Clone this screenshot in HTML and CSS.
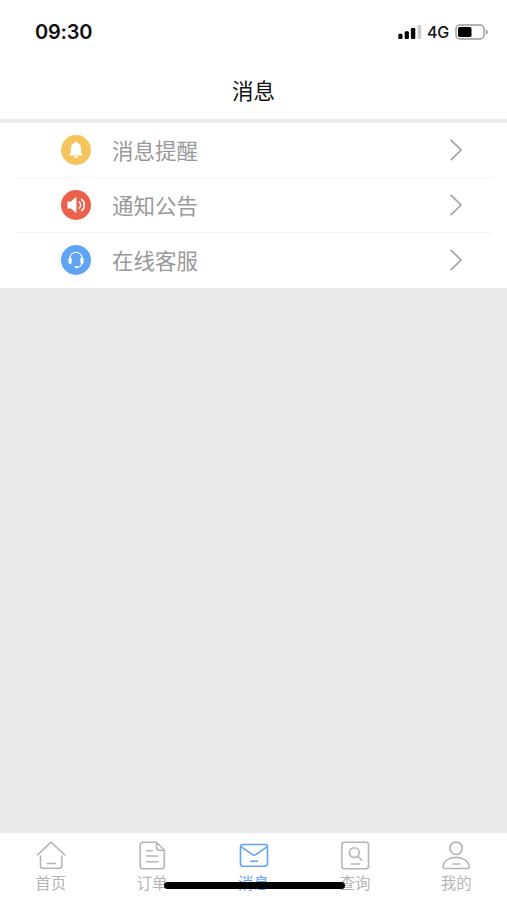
FILE: index.html
```html
<!DOCTYPE html>
<html lang="zh-CN">
<head>
<meta charset="utf-8">
<meta name="viewport" content="width=device-width, initial-scale=1">
<title>消息</title>
<link rel="stylesheet" href="styles.css">
</head>
<body>
<div class="app">
  <div class="status">
    <span class="time">09:30</span>
    <div class="status-right">
      <svg class="signal" width="24" height="16" viewBox="0 0 24 16">
        <rect x="0.3" y="9.7" width="4.2" height="5.3" rx="1.2"/>
        <rect x="6.7" y="7.2" width="4.2" height="7.8" rx="1.2"/>
        <rect x="12.9" y="4" width="4.4" height="11" rx="1.2"/>
        <rect class="dim" x="19.5" y="1" width="3.8" height="14" rx="1.2"/>
      </svg>
      <span class="network">4G</span>
      <svg class="battery" width="34" height="16" viewBox="0 0 34 16">
        <rect class="shell" x="1" y="1" width="28" height="14" rx="4"/>
        <rect x="3" y="3" width="13.5" height="10" rx="1.8"/>
        <path class="cap" d="M30.8 5.2c2.6 1 2.6 4.6 0 5.6z"/>
      </svg>
    </div>
  </div>
  <header class="header"><h1>消息</h1></header>
  <main class="content">
    <ul class="list">
      <li class="row">
        <svg class="badge bell" width="30" height="30" viewBox="0 0 30 30">
          <circle cx="15" cy="15" r="15"/>
          <path fill="#fff" d="M15 6.800c.9 0 1.400.5 1.500 1.200 2.300.7 3.400 2.600 3.400 5 0 4.200.6 5.400 1.500 6.200.5.500.2 1.200-.5 1.200H9.100c-.7 0-1-.7-.5-1.200.9-.8 1.500-2 1.500-6.200 0-2.400 1.100-4.300 3.400-5 .1-.7.600-1.200 1.500-1.200zM12.800 21.400h4.400c-.4 1-1.200 1.500-2.200 1.500s-1.800-.5-2.200-1.500z"/>
        </svg>
        <span class="label">消息提醒</span>
        <svg class="chevron" width="14" height="24" viewBox="0 0 14 24"><path d="M1.700 1.800 12 12 1.700 22.200"/></svg>
      </li>
      <li class="row">
        <svg class="badge speaker" width="30" height="30" viewBox="0 0 30 30">
          <circle cx="15" cy="15" r="15"/>
          <path fill="#fff" d="M7 11.500h3l4.700-4.300c.4-.3.700-.1.700.3v15c0 .4-.3.600-.7.300L10 18.500H7c-.4 0-.6-.2-.6-.6v-5.800c0-.4.200-.6.600-.6z"/>
          <path class="wave" d="M18.100 11.800c2.100 1.400 2.100 5 0 6.400M20.500 9.400c3.800 2.600 3.800 8.600 0 11.200"/>
        </svg>
        <span class="label">通知公告</span>
        <svg class="chevron" width="14" height="24" viewBox="0 0 14 24"><path d="M1.700 1.800 12 12 1.700 22.200"/></svg>
      </li>
      <li class="row">
        <svg class="badge headset" width="30" height="30" viewBox="0 0 30 30">
          <circle cx="15" cy="15" r="15"/>
          <path class="band" d="M8.900 13.500c0-8.200 12.200-8.200 12.200 0M20.900 18.500c-.4 2.200-2 3.500-4.600 3.700"/>
          <rect fill="#fff" x="7.500" y="12.800" width="3.200" height="6.200" rx="1.400"/>
          <rect fill="#fff" x="19.400" y="12.800" width="3.200" height="6.200" rx="1.400"/>
          <ellipse fill="#fff" cx="15.400" cy="22.200" rx="1.700" ry="1.100"/>
        </svg>
        <span class="label">在线客服</span>
        <svg class="chevron" width="14" height="24" viewBox="0 0 14 24"><path d="M1.700 1.800 12 12 1.700 22.200"/></svg>
      </li>
    </ul>
  </main>
  <nav class="tabs">
    <a class="tab">
      <svg width="30" height="30" viewBox="0 0 30 30"><path d="M1.500 14 13.700 2.300q1.300-1.200 2.600 0L28.800 14M4.500 15v9.500q0 2.700 2.700 2.700h16q2.700 0 2.700-2.700V15M11.300 22.500h8"/></svg>
      <span>首页</span>
    </a>
    <a class="tab">
      <svg width="30" height="30" viewBox="0 0 30 30"><path d="M19.500 1.200H6Q3.200 1.200 3.200 4v21q0 2.800 2.800 2.800h18.500q2.800 0 2.800-2.800V9.300zM19.500 1.200v5.300q0 2.800 2.800 2.800h5M9.800 9.700h5.500M9.800 15h11M9.800 20.800h11"/></svg>
      <span>订单</span>
    </a>
    <a class="tab active">
      <svg width="30" height="30" viewBox="0 0 30 30"><rect x="1.500" y="3.500" width="27" height="21.700" rx="2.500"/><path d="M2.300 5.900 13.600 13.600q1.600 1 3.200 0L28 5.900M11.500 20.300h7"/></svg>
      <span>消息</span>
    </a>
    <a class="tab">
      <svg width="30" height="30" viewBox="0 0 30 30"><rect x="1.900" y="1.200" width="26.600" height="26.600" rx="2.500"/><circle cx="14.300" cy="11.600" r="4.900"/><path d="m17.900 15.200 3.700 3.800M11.200 23h8.300"/></svg>
      <span>查询</span>
    </a>
    <a class="tab">
      <svg width="30" height="30" viewBox="0 0 30 30"><circle cx="15.100" cy="7.300" r="6.200"/><path d="M4.200 27.500h21.900q2.400 0 2.200-2.100C27 19.500 21.500 16.400 15.100 16.400S3.200 19.500 2 25.400q-.2 2.100 2.200 2.100zM11.800 23h7"/></svg>
      <span>我的</span>
    </a>
    <div class="home-indicator"></div>
  </nav>
</div>
</body>
</html>
```
FILE: styles.css
```css
* { box-sizing: border-box; }

body {
  margin: 0;
  font-family: "Noto Sans CJK SC", sans-serif;
  background: #fff;
}

.app {
  display: flex;
  flex-direction: column;
  height: 900px;
}

.status {
  display: flex;
  align-items: center;
  justify-content: space-between;
  height: 64px;
  padding: 0 18.500px 0 35px;
  color: #111;
  font-family: Inter, sans-serif;
}

.time {
  font-size: 20px;
  font-weight: 600;
  letter-spacing: -0.2px;
}

.status-right {
  display: flex;
  align-items: center;
}

.network {
  margin: 0 5px 0 5.500px;
  width: 22.500px;
  font-size: 16px;
  font-weight: 500;
  letter-spacing: -0.2px;
}

.signal .dim { fill: #ccc; }
.battery .shell { fill: none; stroke: #999; stroke-width: 1.4; }
.battery .cap { fill: #999; }

.header {
  display: flex;
  align-items: center;
  justify-content: center;
  height: 59px;
  padding-bottom: 4px;
  border-bottom: 4px solid #ebebeb;
}

.header h1 {
  margin: 0;
  font-size: 21.500px;
  font-weight: 400;
  line-height: 32px;
  color: #111;
}

.content {
  flex: 1;
  background: #eaeaea;
}

.list {
  margin: 0;
  padding: 0 14px 0 16px;
  list-style: none;
  background: #fff;
}

.row {
  display: flex;
  align-items: center;
  height: 55px;
  padding: 0 30px 0 45px;
  border-bottom: 1px solid #f4f4f4;
}

.row:last-child { border-bottom-color: #fff; }

.badge { margin-left: 0.3px; }
.bell circle { fill: #f5c45c; }
.speaker circle { fill: #ea614c; }
.headset circle { fill: #5fa3f5; }
.wave, .band { fill: none; stroke: #fff; stroke-linecap: round; }
.wave { stroke-width: 1.5; }
.band { stroke-width: 1.2; }

.label {
  flex: 1;
  margin-left: 20.700px;
  padding-bottom: 1px;
  font-size: 21.500px;
  font-weight: 400;
  line-height: 32px;
  color: #999;
}

.chevron { fill: none; stroke: #a3a3a3; stroke-width: 1.7; }

.tabs {
  position: relative;
  display: flex;
  height: 67px;
  padding-top: 8px;
  background: #fff;
}

.tab {
  flex: 1;
  display: flex;
  flex-direction: column;
  align-items: center;
  color: #b5b5b5;
  font-size: 15.500px;
  font-weight: 400;
  line-height: 23px;
}

.tab svg {
  fill: none;
  stroke: currentColor;
  stroke-width: 1.6;
  stroke-linecap: round;
  stroke-linejoin: round;
}

.tab.active { color: #62a3f6; }

.home-indicator {
  position: absolute;
  left: 164px;
  bottom: 11px;
  width: 181px;
  height: 7px;
  border-radius: 4px;
  background: #000;
}
```
